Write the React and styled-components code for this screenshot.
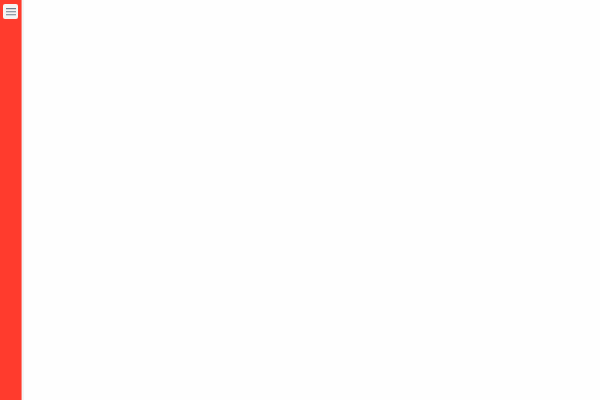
import React, { useState } from 'react';
import styled, { createGlobalStyle } from 'styled-components';

const GlobalStyle = createGlobalStyle`
	* {
		box-sizing: border-box;
	}
	body {
		margin: 0;
		background-color: #fefefe;
		font-family: 'Liberation Sans', Arial, sans-serif;
	}
`;

const Container = styled.div`
	display: flex;
	min-height: 100vh;
`;

const Sidebar = styled.nav`
	display: flex;
	flex-direction: column;
	align-items: center;
	flex-shrink: 0;
	width: ${({ $open }) => ($open ? '160px' : '22px')};
	padding-top: 4px;
	background-color: #ff3b2d;
	border-right: 1px solid #fb8980;
	box-shadow: 2px 0 0 #f3f5f5;
`;

const MenuButton = styled.button`
	display: flex;
	align-items: center;
	justify-content: center;
	width: 15px;
	height: 15px;
	padding: 0;
	border: none;
	border-radius: 2px;
	background-color: #f6f4f3;
	color: #6f7f90;
	cursor: pointer;
	&:hover {
		background-color: #ffffff;
	}
`;

const Content = styled.main`
	flex: 1;
`;

const MenuIcon = () => (
	<svg width="15" height="15" viewBox="0 0 15 15" fill="none" stroke="currentColor" aria-hidden="true">
		<path d="M3 4.6h10M3 7.7h10M3 10.8h10" strokeWidth="1.1" />
	</svg>
);

const App = () => {
	const [open, setOpen] = useState(false);

	return (
		<>
			<GlobalStyle />
			<Container>
				<Sidebar $open={open}>
					<MenuButton type="button" aria-label="Menu" aria-expanded={open} onClick={() => setOpen(!open)}>
						<MenuIcon />
					</MenuButton>
				</Sidebar>
				<Content />
			</Container>
		</>
	);
};

export default App;
